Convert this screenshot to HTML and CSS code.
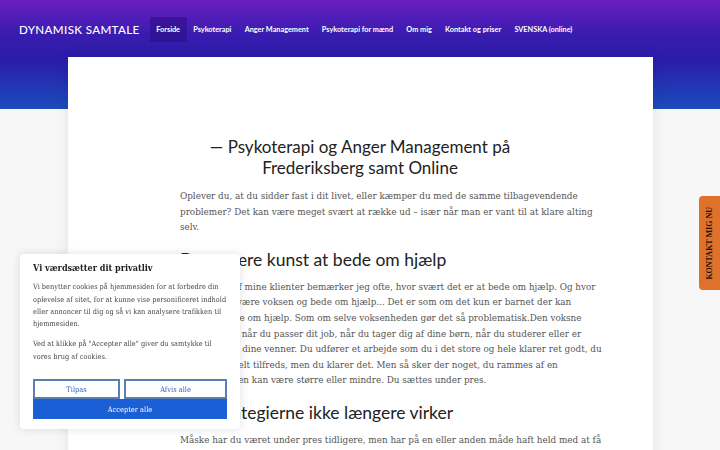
FILE: index.html
```html
<!DOCTYPE html>
<html lang="da">
<head>
<meta charset="utf-8">
<title>Dynamisk Samtale</title>
<link rel="stylesheet" href="styles.css">
</head>
<body>
<header class="site-header">
  <div class="topbar">
    <div class="logo">DYNAMISK SAMTALE</div>
    <nav class="nav">
      <a class="nav-item active">Forside</a>
      <a class="nav-item">Psykoterapi</a>
      <a class="nav-item">Anger Management</a>
      <a class="nav-item">Psykoterapi for mænd</a>
      <a class="nav-item">Om mig</a>
      <a class="nav-item">Kontakt og priser</a>
      <a class="nav-item">SVENSKA (online)</a>
    </nav>
  </div>
</header>
<main class="card">
  <div class="content">
    <h1 class="title">— Psykoterapi og Anger Management på<br>Frederiksberg samt Online</h1>
    <p class="text">Oplever du, at du sidder fast i dit livet, eller kæmper du med de samme tilbagevendende<br>problemer? Det kan være meget svært at række ud – især når man er vant til at klare alting<br>selv.</p>
    <h2 class="subtitle">Den svære kunst at bede om hjælp</h2>
    <p class="text">Hos mange af mine klienter bemærker jeg ofte, hvor svært det er at bede om hjælp. Og hvor<br>svært det at være voksen og bede om hjælp... Det er som om det kun er barnet der kan<br>får lov at bede om hjælp. Som om selve voksenheden gør det så problematisk.Den voksne<br>Du har dit liv når du passer dit job, når du tager dig af dine børn, når du studerer eller er<br>sammen med dine venner. Du udfører et arbejde som du i det store og hele klarer ret godt, du<br>er nok ikke helt tilfreds, men du klarer det. Men så sker der noget, du rammes af en<br>stor krise – den kan være større eller mindre. Du sættes under pres.</p>
    <h2 class="subtitle">Når strategierne ikke længere virker</h2>
    <p class="text">Måske har du været under pres tidligere, men har på en eller anden måde haft held med at få<br>det til at fungere igen.</p>
  </div>
</main>

<aside class="cookie">
  <h3 class="cookie-title">Vi værdsætter dit privatliv</h3>
  <p class="cookie-text">Vi benytter cookies på hjemmesiden for at forbedre din<br>oplevelse af sitet, for at kunne vise personificeret indhold<br>eller annoncer til dig og så vi kan analysere trafikken til<br>hjemmesiden.</p>
  <p class="cookie-text">Ved at klikke på "Accepter alle" giver du samtykke til<br>vores brug af cookies.</p>
  <div class="cookie-buttons">
    <button class="btn btn-outline">Tilpas</button>
    <button class="btn btn-outline">Afvis alle</button>
    <button class="btn btn-primary">Accepter alle</button>
  </div>
</aside>

<a class="side-tab"><span class="side-tab-text">KONTAKT MIG NU</span></a>
</body>
</html>
```

FILE: styles.css
```css
html {
  scrollbar-width: none;
}
html::-webkit-scrollbar { display: none; }

body {
  margin: 0;
  background: #f7f7f7;
  font-family: "DejaVu Serif Condensed", "DejaVu Serif", serif;
  font-stretch: condensed;
  overflow: hidden;
  height: 450px;
}

.site-header {
  height: 109px;
  background: linear-gradient(180deg, #6a1fc2 0%, #3a1cb0 30%, #2a1ca8 55%, #1f3db6 85%, #1e4cbb 100%);
}

.topbar {
  display: flex;
  align-items: center;
  padding: 17px 0 0 19px;
}

.logo {
  font-family: "Lato", sans-serif;
  font-size: 11.6px;
  font-weight: 500;
  color: #fff;
  letter-spacing: 0.35px;
  margin-right: 10px;
}

.nav {
  display: flex;
  align-items: center;
}

.nav-item {
  font-family: "Lato", sans-serif;
  font-size: 7.3px;
  font-weight: 700;
  color: #fff;
  padding: 0 6.6px;
  height: 25px;
  line-height: 25px;
  text-decoration: none;
  white-space: nowrap;
}

.nav-item.active {
  background: rgba(40, 10, 120, 0.45);
}

.card {
  width: 585px;
  margin: -52px auto 0;
  background: #fff;
  box-shadow: 0 0 14px rgba(0, 0, 0, 0.08);
  min-height: 450px;
  padding-top: 79px;
}

.content {
  width: 360px;
  margin: 0 auto;
}

.title {
  font-family: "Lato", sans-serif;
  font-weight: 400;
  font-size: 17px;
  line-height: 21px;
  color: #222;
  text-align: center;
  margin: 0 0 10px;
}

.subtitle {
  font-family: "Lato", sans-serif;
  font-weight: 400;
  font-size: 17.5px;
  line-height: 22px;
  color: #222;
  margin: 14px 0 8px;
}

.text {
  font-size: 9.8px;
  line-height: 15.6px;
  color: #555;
  margin: 0;
  white-space: nowrap;
}

.cookie {
  position: fixed;
  left: 20px;
  bottom: 21px;
  width: 194px;
  padding: 9px 13px 10px;
  background: #fff;
  border-radius: 4px;
  box-shadow: 0 0 10px rgba(0, 0, 0, 0.12);
}

.cookie-title {
  font-size: 9px;
  font-weight: 700;
  color: #222;
  margin: 0 0 8px;
}

.cookie-text {
  font-size: 7.35px;
  line-height: 12.3px;
  color: #444;
  margin: 0 0 8px;
  white-space: nowrap;
}

.cookie-text + .cookie-text {
  margin-bottom: 16px;
}

.cookie-buttons {
  display: grid;
  grid-template-columns: 87px 1fr;
  column-gap: 4px;
}

.btn {
  font-family: "DejaVu Serif Condensed", "DejaVu Serif", serif;
  font-stretch: condensed;
  font-size: 7.4px;
  height: 20px;
  padding: 0;
  cursor: pointer;
}

.btn-outline {
  background: #fff;
  border: 2px solid #5a7fb0;
  color: #2a5fb8;
}

.btn-primary {
  grid-column: 1 / span 2;
  background: #1a5fd6;
  border: 1px solid #1a5fd6;
  color: #fff;
}

.side-tab {
  position: fixed;
  right: 0;
  top: 196px;
  width: 21px;
  height: 94px;
  background: #e0712a;
  border-radius: 4px 0 0 4px;
  display: flex;
  align-items: center;
  justify-content: center;
}

.side-tab-text {
  writing-mode: vertical-rl;
  transform: rotate(180deg);
  font-family: "Liberation Serif", serif;
  font-size: 8px;
  font-weight: 700;
  color: #2a1208;
  white-space: nowrap;
}
```
